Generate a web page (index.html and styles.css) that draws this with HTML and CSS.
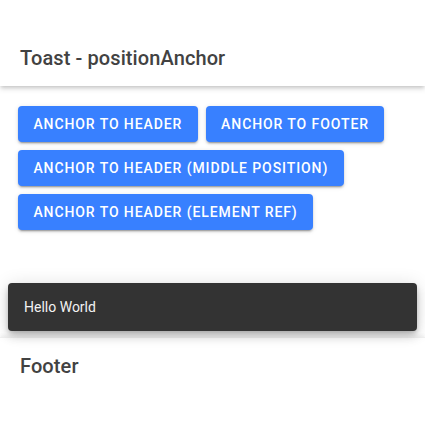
FILE: index.html
```html
<!DOCTYPE html>
<html>
<head>
<meta charset="utf-8">
<link rel="stylesheet" href="styles.css">
</head>
<body>
<div class="app">
  <header class="header">
    <div class="toolbar"><div class="title">Toast - positionAnchor</div></div>
  </header>
  <main class="content">
    <div class="row">
      <button class="btn">Anchor to Header</button>
      <button class="btn">Anchor to Footer</button>
    </div>
    <div class="row">
      <button class="btn">Anchor to Header (Middle Position)</button>
    </div>
    <div class="row">
      <button class="btn">Anchor to Header (Element Ref)</button>
    </div>
  </main>
  <footer class="footer">
    <div class="toolbar"><div class="title">Footer</div></div>
  </footer>
  <div class="toast"><div class="toast-msg">Hello World</div></div>
</div>
</body>
</html>
```

FILE: styles.css
```css
html, body {
  margin: 0;
  padding: 0;
  height: 100%;
  background: #fff;
  font-family: Roboto, "Liberation Sans", sans-serif;
}
.app {
  position: relative;
  height: 100vh;
  display: flex;
  flex-direction: column;
  overflow: hidden;
}
.header {
  padding-top: 30px;
  background: #fff;
  position: relative;
  z-index: 2;
  box-shadow: 0 2px 4px -1px rgba(0,0,0,0.2), 0 4px 5px 0 rgba(0,0,0,0.08);
}
.toolbar {
  height: 56px;
  display: flex;
  align-items: center;
  padding: 0 4px;
}
.title {
  padding: 0 16px;
  font-size: 20px;
  font-weight: 500;
  letter-spacing: 0.005em;
  color: #424242;
}
.content {
  flex: 1;
  padding: 16px;
}
.row {
  display: flex;
  gap: 4px;
}
.btn {
  margin: 4px 2px;
  height: 36px;
  padding: 0 15.4px;
  border: 0;
  border-radius: 4px;
  background: #3880ff;
  color: #fff;
  font-family: Roboto, "Liberation Sans", sans-serif;
  font-size: 14px;
  font-weight: 500;
  letter-spacing: 0.065em;
  text-transform: uppercase;
  box-shadow: 0 3px 1px -2px rgba(0,0,0,0.2), 0 2px 2px 0 rgba(0,0,0,0.14), 0 1px 5px 0 rgba(0,0,0,0.12);
}
.footer {
  background: #fff;
  padding-bottom: 31px;
  position: relative;
  border-top: 1px solid rgba(0,0,0,0.06);
  box-shadow: 0 -2px 3px rgba(0,0,0,0.06);
}
.toast {
  position: absolute;
  top: 283px;
  left: 8px;
  right: 8px;
  height: 48px;
  background: #333333;
  border-radius: 4px;
  display: flex;
  align-items: center;
  z-index: 5;
  box-shadow: 0 3px 5px -1px rgba(0,0,0,0.2), 0 6px 10px 0 rgba(0,0,0,0.14), 0 1px 18px 0 rgba(0,0,0,0.12);
}
.toast-msg {
  padding: 0 16px;
  font-size: 14px;
  color: #f2f2f2;
}
```
